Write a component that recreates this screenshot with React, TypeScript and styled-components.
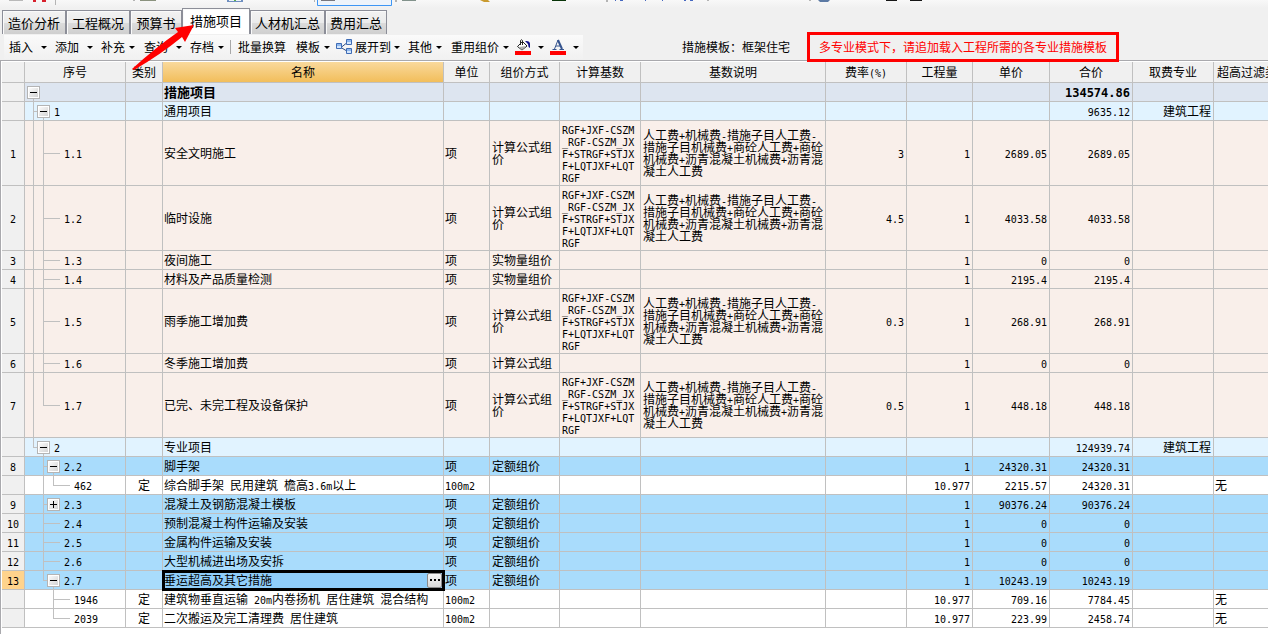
import React from 'react';
import styled, { createGlobalStyle, css } from 'styled-components';

const LINE = '#c0c0c0';

const GlobalStyle = createGlobalStyle`
  * { box-sizing: border-box; }
  html, body { margin: 0; padding: 0; }
  body {
    background: #ffffff;
    color: #000;
    font: 12px/12px "Noto Sans CJK SC", sans-serif;
    overflow-x: hidden;
  }
  button { font: inherit; color: inherit; border: 0; padding: 0; background: none; cursor: default; }
`;

/* ---------- text ---------- */

const Latin = styled.span<{ $bold?: boolean }>`
  font-family: "DejaVu Sans Mono", monospace;
  font-size: ${p => (p.$bold ? 12 : 10)}px;
  line-height: 8px;
`;

/* Latin runs take half the width of a Chinese character */
const Mixed = ({ text, bold }: { text: string; bold?: boolean }) => (
  <>
    {(text.match(/[\x20-\x7e]+|[^\x20-\x7e]+/g) || []).map((part, i) =>
      /^[\x20-\x7e]/.test(part) ? <Latin key={i} $bold={bold}>{part}</Latin> : part,
    )}
  </>
);

/* ---------- page head ---------- */

const Page = styled.main`
  position: relative;
  min-height: 100vh;
  display: flex;
  flex-direction: column;
  overflow: hidden;
`;

const Head = styled.header`
  background: #f0f0f0;
`;

const UpperStrip = styled.div`
  height: 8px;
  background: linear-gradient(#f8f8f8, #f0f0f0);
`;

const Tabs = styled.nav`
  display: flex;
  align-items: flex-end;
  height: 26px;
  padding-left: 2px;
`;

const Tab = styled.button<{ $active?: boolean; $w: number }>`
  width: ${p => p.$w}px;
  height: 24px;
  border: 1px solid #8c8e98;
  border-bottom: 0;
  font-size: 13px;
  line-height: 22px;
  white-space: nowrap;
  background: linear-gradient(#f2f2f2 0%, #ebebeb 50%, #dcdcdc 51%, #cfcfcf 100%);
  box-shadow: inset 1px 1px #fafafa;
  ${p => p.$active && css`
    height: 26px;
    padding-bottom: 2px;
    background: #ffffff;
  `}
`;

const ToolRow = styled.div`
  display: flex;
  align-items: center;
  height: 26px;
  padding-left: 4px;
`;

const Toolbar = styled.div`
  display: flex;
  align-items: center;
  height: 24px;
  width: 579px;
  padding-left: 5px;
  background: linear-gradient(#fafafa, #f1f1f1);
`;

const Tool = styled.button<{ $w: number; $gap?: number }>`
  display: flex;
  align-items: center;
  gap: ${p => p.$gap ?? 4}px;
  width: ${p => p.$w}px;
  height: 22px;
  white-space: nowrap;
`;

const Caret = styled.i`
  border: 3px solid transparent;
  border-top-color: #000;
  border-bottom: 0;
`;

const Divider = styled.span`
  width: 1px;
  height: 14px;
  margin-right: 7px;
  background: #a8a8a8;
`;

const TemplateLabel = styled.span`
  margin-left: 99px;
  white-space: nowrap;
`;

const Notice = styled.strong`
  position: relative;
  z-index: 2;
  flex: none;
  margin-left: 17px;
  height: 30px;
  padding: 0 9px;
  border: 3px solid #ff0000;
  background: #f0f0f0;
  color: #ff0000;
  font-weight: 400;
  line-height: 24px;
`;

const Arrow = styled.svg`
  position: absolute;
  left: 125px;
  top: 15px;
  z-index: 3;
  pointer-events: none;
`;

/* ---------- grid ---------- */

const GridFrame = styled.section`
  flex: 1;
  overflow: hidden;
  border-top: 1px solid #a9a9ad;
  border-left: 1px solid #a9a9ad;
  padding: 1px 0 0 1px;
  background: #fff;
`;

const Table = styled.table`
  table-layout: fixed;
  width: max(100%, 1293px);
  border-collapse: separate;
  border-spacing: 0;
`;

const HeadCell = styled.th<{ $selected?: boolean; $left?: boolean }>`
  height: 21px;
  padding: 0 3px;
  border-right: 1px solid ${LINE};
  border-bottom: 1px solid ${LINE};
  background: ${p => (p.$selected ? 'linear-gradient(#f9d99c, #f2be5b)' : '#f0f0f0')};
  font-weight: 400;
  white-space: nowrap;
  text-align: ${p => (p.$left ? 'left' : 'center')};
`;

type Tone = 'root' | 'group' | 'pink' | 'blue' | 'plain';
const tones: Record<Tone, string> = {
  root: '#dde5f0',
  group: '#e1f3ff',
  pink: '#f9efea',
  blue: '#a9dcfc',
  plain: '#ffffff',
};

const Row = styled.tr<{ $tone: Tone; $tall?: boolean }>`
  height: ${p => (p.$tall ? 65 : 19)}px;
  background: ${p => tones[p.$tone]};
`;

const Cell = styled.td<{ $align?: 'right' | 'center'; $wrap?: boolean; $bold?: boolean }>`
  padding: 0 1px;
  border-right: 1px solid ${LINE};
  border-bottom: 1px solid ${LINE};
  text-align: ${p => p.$align ?? 'left'};
  white-space: ${p => (p.$wrap ? 'normal' : 'nowrap')};
  line-break: anywhere;
  ${p => p.$wrap && css`padding-left: 2px;`}
  ${p => p.$align === 'right' && css`padding-right: 2px;`}
  ${p => p.$bold && css`font-size: 13px; font-weight: 700;`}
`;

const RowNumber = styled.th<{ $active?: boolean }>`
  padding: 0;
  border-right: 1px solid ${LINE};
  border-bottom: 1px solid ${LINE};
  background: ${p => (p.$active ? '#ffd38c' : '#f0f0f0')};
  font-weight: 400;
`;

const TreeCell = styled(Cell)`
  padding: 0 0 0 2px;
`;

const TreeLine = styled.div<{ $tall?: boolean }>`
  display: flex;
  height: ${p => (p.$tall ? 64 : 18)}px;
  line-height: ${p => (p.$tall ? 64 : 18)}px;
`;

const fill = `linear-gradient(${LINE}, ${LINE})`;

type GuideKind = 'none' | 'pipe' | 'tee' | 'elbow';
const Guide = styled.span<{ $kind: GuideKind; $mid: number }>`
  width: 10px;
  background-repeat: no-repeat;
  ${p => p.$kind !== 'none' && css`
    background-image: ${fill}, ${fill};
    background-position: 6px 0, 6px ${p.$mid}px;
    background-size: 1px ${p.$kind === 'elbow' ? `${p.$mid}px` : '100%'}, ${p.$kind === 'pipe' ? 0 : 4}px 1px;
    background-repeat: no-repeat;
  `}
`;

const Leader = styled.span<{ $mid: number }>`
  width: 13px;
  margin-right: 4px;
  background: ${fill} 0 ${p => p.$mid}px / 13px 1px no-repeat;
`;

const NodeSlot = styled.span<{ $open: boolean }>`
  width: 13px;
  margin-right: 4px;
  padding-top: 3px;
  background: ${fill} 6px 100% / 1px ${p => (p.$open ? 4 : 0)}px no-repeat;
`;

const Toggle = styled.button<{ $open: boolean }>`
  display: block;
  width: 13px;
  height: 13px;
  border: 1px solid #b4b4b4;
  box-shadow: inset 0 0 0 1px #fff;
  background:
    linear-gradient(#000, #000) 2px 5px / 7px 1px no-repeat,
    linear-gradient(#000, #000) 5px 2px / 1px ${p => (p.$open ? 0 : 7)}px no-repeat,
    linear-gradient(135deg, #ffffff, #cfcfcf);
`;

const FocusCell = styled(Cell)`
  position: relative;
  outline: 3px solid #000;
  outline-offset: -2px;
  background: #90cefa;
`;

const FocusLine = styled.div`
  display: flex;
  align-items: center;
  justify-content: space-between;
  height: 18px;
`;

const MoreButton = styled.button`
  display: flex;
  align-items: center;
  justify-content: center;
  gap: 2px;
  width: 15px;
  height: 15px;
  border: 1px solid #8a8a8a;
  border-radius: 2px;
  background: linear-gradient(#f6f6f6, #d6d6d6);
`;

const Dot = styled.i`
  width: 2px;
  height: 2px;
  background: #000;
`;

/* ---------- data ---------- */

const columns: [string, number][] = [
  ['', 23], ['序号', 101], ['类别', 37], ['名称', 281], ['单位', 46], ['组价方式', 70],
  ['计算基数', 81], ['基数说明', 185], ['费率(%)', 81], ['工程量', 66], ['单价', 77],
  ['合价', 83], ['取费专业', 81], ['超高过滤类别', 0],
];

const FORMULA = 'RGF+JXF-CSZM_RGF-CSZM_JXF+STRGF+STJXF+LQTJXF+LQTRGF';
const FORMULA_TEXT = '人工费+机械费-措施子目人工费-措施子目机械费+商砼人工费+商砼机械费+沥青混凝土机械费+沥青混凝土人工费';

interface Item {
  no?: string; tone: Tone; guides: GuideKind[]; toggle?: 'open' | 'closed'; code?: string;
  kind?: string; name: string; unit?: string; method?: string; formula?: boolean;
  rate?: string; qty?: string; price?: string; total?: string; major?: string; high?: string;
}

const pink = (no: string, name: string, method: string, price: string, rate?: string, last?: boolean): Item => ({
  no, tone: 'pink', guides: ['pipe', last ? 'elbow' : 'tee'], code: `1.${no}`, name, unit: '项', method,
  formula: !!rate, rate, qty: '1', price, total: price,
});
const blue = (no: string, code: string, name: string, price: string, toggle?: 'open' | 'closed', last?: boolean): Item => ({
  no, tone: 'blue', guides: ['none', last ? 'elbow' : 'tee'], toggle, code, name, unit: '项', method: '定额组价',
  qty: '1', price, total: price,
});
const quota = (code: string, name: string, price: string, total: string, guides: GuideKind[]): Item => ({
  tone: 'plain', guides, code, kind: '定', name, unit: '100m2', qty: '10.977', price, total, high: '无',
});

const items: Item[] = [
  { tone: 'root', guides: [], toggle: 'open', name: '措施项目', total: '134574.86' },
  { tone: 'group', guides: ['tee'], toggle: 'open', code: '1', name: '通用项目', total: '9635.12', major: '建筑工程' },
  pink('1', '安全文明施工', '计算公式组价', '2689.05', '3'),
  pink('2', '临时设施', '计算公式组价', '4033.58', '4.5'),
  pink('3', '夜间施工', '实物量组价', '0'),
  pink('4', '材料及产品质量检测', '实物量组价', '2195.4'),
  pink('5', '雨季施工增加费', '计算公式组价', '268.91', '0.3'),
  pink('6', '冬季施工增加费', '计算公式组', '0'),
  pink('7', '已完、未完工程及设备保护', '计算公式组价', '448.18', '0.5', true),
  { tone: 'group', guides: ['elbow'], toggle: 'open', code: '2', name: '专业项目', total: '124939.74', major: '建筑工程' },
  blue('8', '2.2', '脚手架', '24320.31', 'open'),
  quota('462', '综合脚手架 民用建筑 檐高3.6m以上', '2215.57', '24320.31', ['none', 'pipe', 'elbow']),
  blue('9', '2.3', '混凝土及钢筋混凝土模板', '90376.24', 'closed'),
  blue('10', '2.4', '预制混凝土构件运输及安装', '0'),
  blue('11', '2.5', '金属构件运输及安装', '0'),
  blue('12', '2.6', '大型机械进出场及安拆', '0'),
  blue('13', '2.7', '垂运超高及其它措施', '10243.19', 'open', true),
  quota('1946', '建筑物垂直运输 20m内卷扬机 居住建筑 混合结构', '709.16', '7784.45', ['none', 'none', 'tee']),
  quota('2039', '二次搬运及完工清理费 居住建筑', '223.99', '2458.74', ['none', 'none', 'elbow']),
];

const tabs: [string, number][] = [
  ['造价分析', 64], ['工程概况', 64], ['预算书', 52], ['措施项目', 68], ['人材机汇总', 75], ['费用汇总', 62],
];

/* ---------- icons ---------- */

const StripIcons = styled.svg`
  display: block;
`;

const ClippedIcons = () => (
  <StripIcons width="940" height="6" aria-hidden="true">
    <path d="M9 0h14v1H9z" fill="#b9b9b9" />
    <path d="M33 0h3v2h-3zM42 0h4v2h-4z" fill="#d8202c" />
    <path d="M55 0h1v5h-1zM133 0h2v1h-2zM314 0h1v2h-1zM395 0h2v2h-2zM606 0h2v2h-2zM707 0h2v1h-2zM809 0h2v1h-2z" fill="#b4b4b4" />
    <path d="M140 0h16v1h-16z" fill="#8a927e" />
    <path d="M227 0h16v2h-16z" fill="#6f8fc0" />
    <path d="M229 0h5v1h-5zM236 0h5v1h-5z" fill="#eef4fb" />
    <path d="M234 0h2v1h-2z" fill="#58b04a" />
    <path d="M317.500 -1v6.500h74v-6.500" fill="#eef4fb" stroke="#3d96f5" />
    <path d="M321 0h14v1h-14z" fill="#77777f" />
    <path d="M402 0h14v1h-14z" fill="#82928c" />
    <path d="M480 0h8l2 2h-6z" fill="#c99a2e" />
    <path d="M552 0h14v1h-14z" fill="#083408" />
    <path d="M615 0h1v1h-1zM620 0h3v1h-3zM645 0h1v1h-1zM662 0h1v1h-1zM684 0h2v1h-2zM690 0h3v1h-3z" fill="#4668c0" />
    <path d="M818 0h12l-2 2h-8z" fill="#5c7aa4" />
    <path d="M886 0h11v1h-11zM910 0h12v1h-12z" fill="#161616" />
  </StripIcons>
);

const ExpandIcon = () => (
  <svg width="16" height="16" viewBox="0 0 16 16" aria-hidden="true">
    <path d="M5 8.500l5-4M5 8.500l5 3" fill="none" stroke="#2f4f86" />
    <path d="M.5 4.500h5v5h-5zM10.500.500h5v5h-5zM10.500 9.500h5v5h-5z" fill="#8fb8ee" stroke="#3f6cb5" />
    <path d="M1 7h4v2H1zM11 3h4v2h-4zM11 12h4v2h-4z" fill="#d4e6fb" />
  </svg>
);

const BucketIcon = () => (
  <svg width="16" height="16" viewBox="0 0 16 16" aria-hidden="true">
    <path d="M2.500 7.500 7.500 2.500 12 7 7 11z" fill="#fff" stroke="#222" />
    <path d="M4 8l7-1-4 4z" fill="#b0b0b0" />
    <path d="M5.500 6V1.500q1-1.500 2 0V6" fill="none" stroke="#222" />
    <path d="M10 2q5-.5 5 3v4q-2-1-2-4z" fill="#10108c" />
    <path d="M0 12h16v4H0z" fill="#ff0000" />
  </svg>
);

const FontColorIcon = () => (
  <svg width="16" height="16" viewBox="0 0 16 16" aria-hidden="true">
    <path d="M2.500 10.500h4M9.500 10.500h4.500M4.500 10 8 1M6 7h4.500" fill="none" stroke="#35548f" />
    <path d="M8 1l4 9" stroke="#35548f" strokeWidth="2" />
    <path d="M0 12h16v4H0z" fill="#ff0000" />
  </svg>
);

/* ---------- parts ---------- */

const ItemRow = ({ item }: { item: Item }) => {
  const tall = !!item.formula;
  const mid = tall ? 32 : 9;
  const bold = item.tone === 'root';
  const num = (v?: string) => (
    <Cell $align="right" $bold={bold}><Mixed text={v ?? ''} bold={bold} /></Cell>
  );
  return (
    <Row $tone={item.tone} $tall={tall}>
      <RowNumber scope="row" $active={item.no === '13'}><Mixed text={item.no ?? ''} /></RowNumber>
      <TreeCell>
        <TreeLine $tall={tall}>
          {item.guides.map((g, i) => <Guide key={i} $kind={g} $mid={mid} />)}
          {item.toggle ? (
            <NodeSlot $open={item.toggle === 'open'}>
              <Toggle $open={item.toggle === 'open'} aria-label={`展开或折叠${item.name}`} />
            </NodeSlot>
          ) : <Leader $mid={mid} />}
          <div><Mixed text={item.code ?? ''} /></div>
        </TreeLine>
      </TreeCell>
      <Cell $align="center">{item.kind}</Cell>
      {item.no === '13' ? (
        <FocusCell>
          <FocusLine>
            {item.name}
            <MoreButton aria-label="更多"><Dot /><Dot /><Dot /></MoreButton>
          </FocusLine>
        </FocusCell>
      ) : <Cell $bold={bold}><Mixed text={item.name} /></Cell>}
      <Cell><Mixed text={item.unit ?? ''} /></Cell>
      <Cell $wrap>{item.method}</Cell>
      <Cell $wrap>{item.formula && <Mixed text={FORMULA} />}</Cell>
      <Cell $wrap>{item.formula && <Mixed text={FORMULA_TEXT} />}</Cell>
      {num(item.rate)}
      {num(item.qty)}
      {num(item.price)}
      {num(item.total)}
      {num(item.major)}
      <Cell>{item.high}</Cell>
    </Row>
  );
};

export default function App() {
  return (
    <Page>
      <GlobalStyle />
      <Head>
        <UpperStrip><ClippedIcons /></UpperStrip>
        <Tabs>
          {tabs.map(([label, w]) => (
            <Tab key={label} $w={w} $active={label === '措施项目'}>{label}</Tab>
          ))}
        </Tabs>
        <ToolRow>
          <Toolbar>
            <Tool $w={46} $gap={8}>插入<Caret /></Tool>
            <Tool $w={46} $gap={8}>添加<Caret /></Tool>
            <Tool $w={43}>补充<Caret /></Tool>
            <Tool $w={46} $gap={8}>查询<Caret /></Tool>
            <Tool $w={40}>存档<Caret /></Tool>
            <Divider />
            <Tool $w={58}>批量换算</Tool>
            <Tool $w={40}>模板<Caret /></Tool>
            <Tool $w={72} $gap={3}><ExpandIcon />展开到<Caret /></Tool>
            <Tool $w={43}>其他<Caret /></Tool>
            <Tool $w={64}>重用组价<Caret /></Tool>
            <Tool $w={35} $gap={7} aria-label="填充颜色"><BucketIcon /><Caret /></Tool>
            <Tool $w={29} $gap={7} aria-label="字体颜色"><FontColorIcon /><Caret /></Tool>
          </Toolbar>
          <TemplateLabel>措施模板：框架住宅</TemplateLabel>
          <Notice>多专业模式下，请追加载入工程所需的各专业措施模板</Notice>
        </ToolRow>
      </Head>
      <GridFrame>
        <Table>
          <colgroup>
            {columns.map(([label, w]) => (
              <col key={label} width={w || undefined} />
            ))}
          </colgroup>
          <thead>
            <tr>
              {columns.map(([label, w]) => (
                <HeadCell key={label} scope="col" $selected={label === '名称'} $left={!w}>
                  <Mixed text={label} />
                </HeadCell>
              ))}
            </tr>
          </thead>
          <tbody>
            {items.map((item, i) => <ItemRow key={i} item={item} />)}
          </tbody>
        </Table>
      </GridFrame>
      <Arrow width="80" height="60" viewBox="0 0 80 60" aria-hidden="true">
        <path d="M7 54Q30 33 53 17L50 13 69 10 60 27 57 22Q35 40 9 55z" fill="#ff0000" />
      </Arrow>
    </Page>
  );
}
